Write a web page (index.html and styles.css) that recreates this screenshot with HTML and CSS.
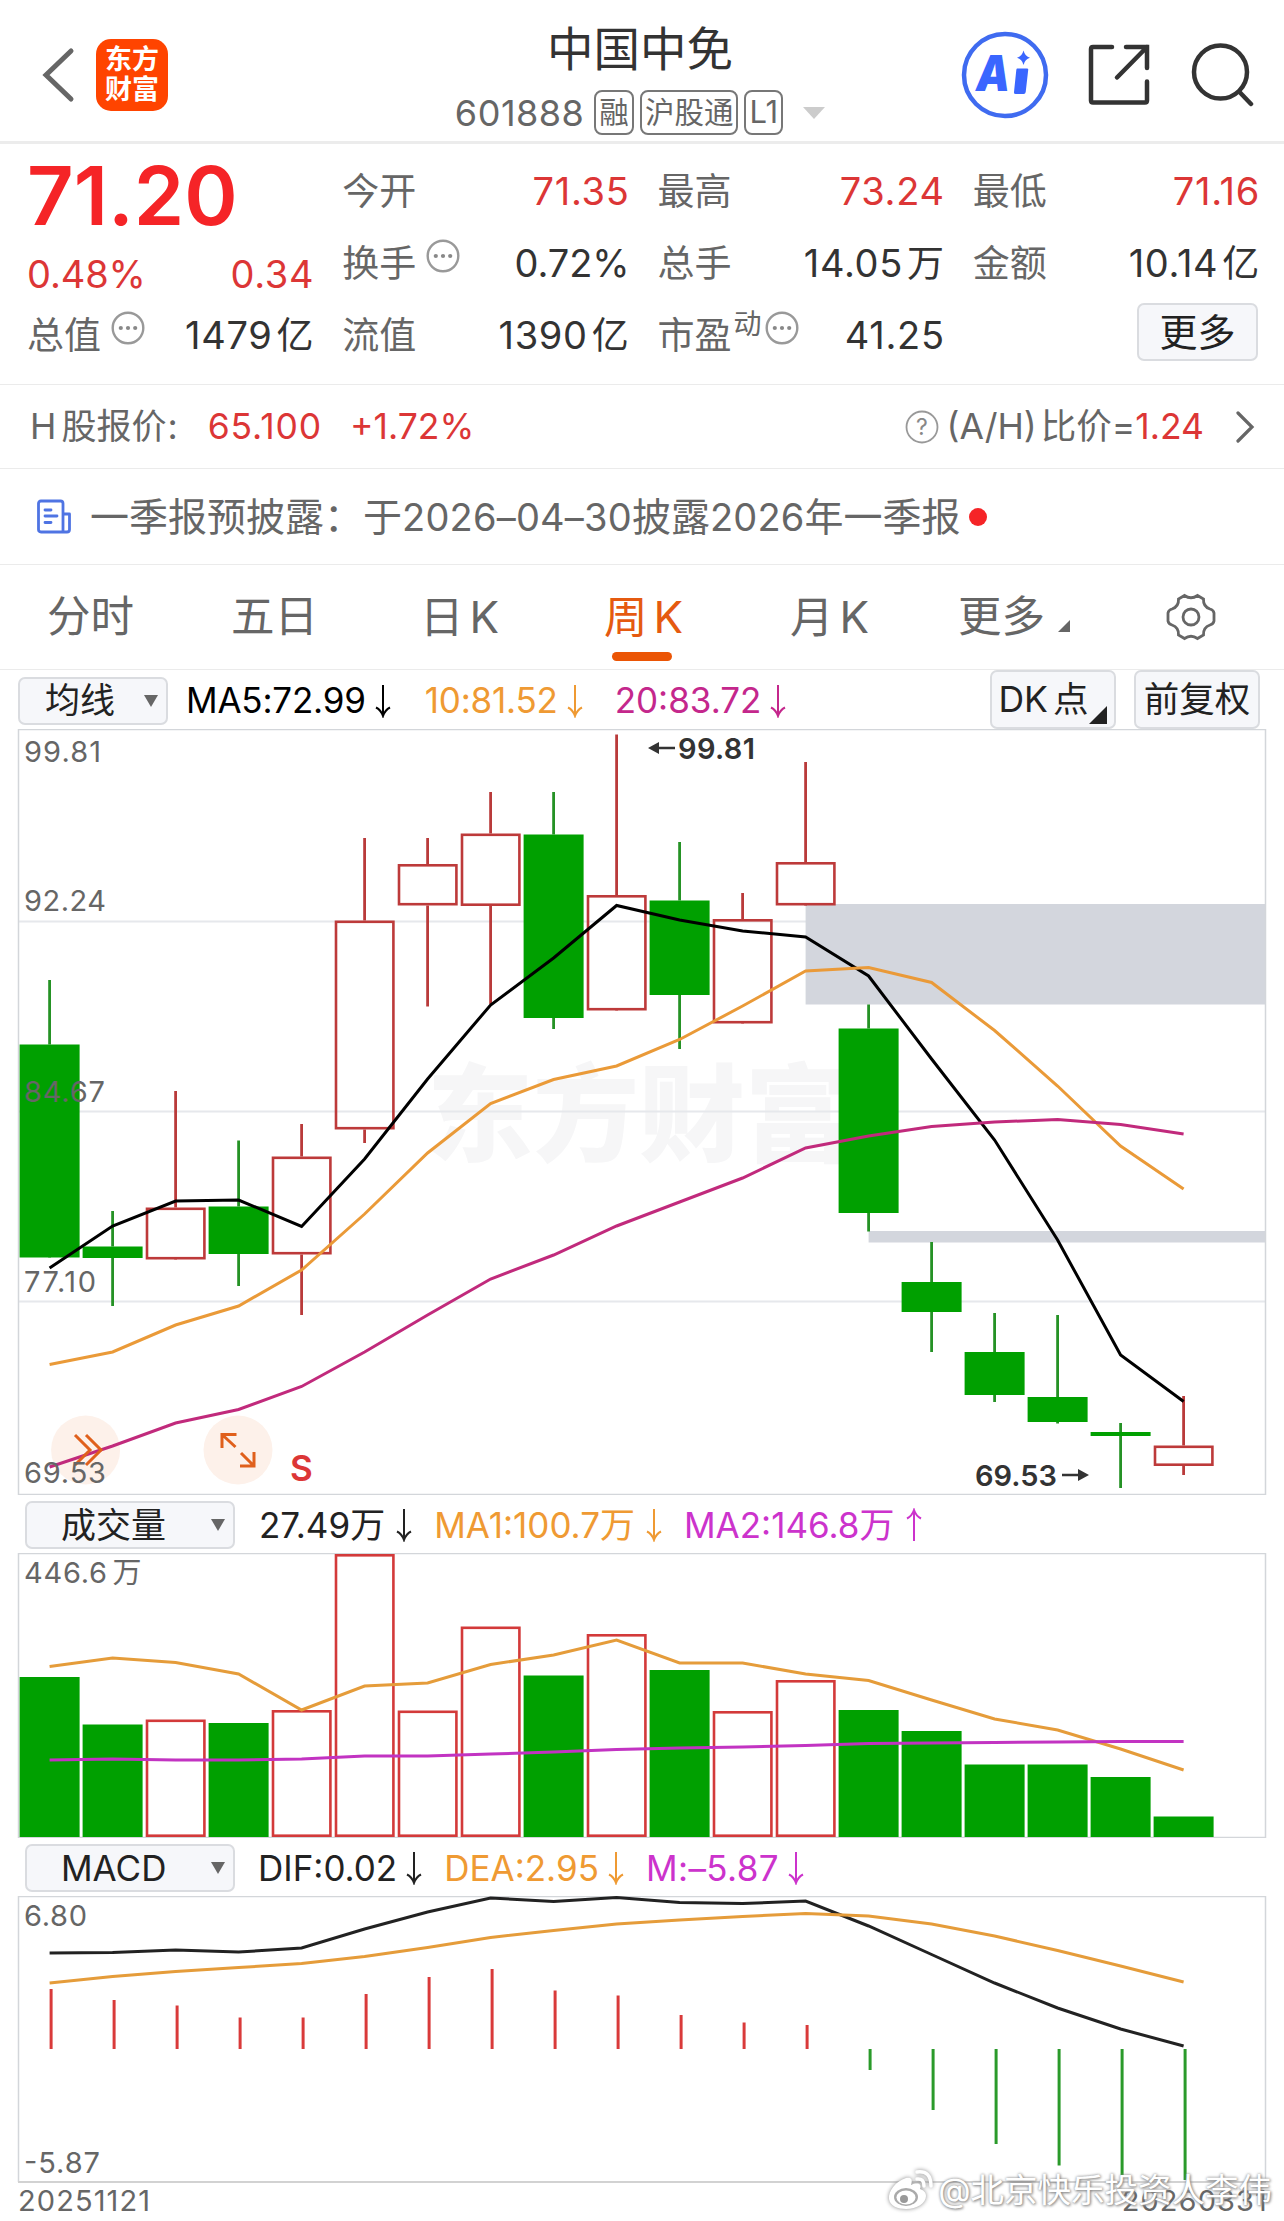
FILE: index.html
```html
<!DOCTYPE html>
<html lang="zh-CN">

<head>
  <meta charset="UTF-8">
  <meta name="viewport" content="width=device-width, initial-scale=1.0">
  <title>中国中免 601888</title>
  <link rel="stylesheet" href="styles.css">
</head>

<body>
  <header class="header">
    <div class="header-left">
      <svg class="back" width="34" height="56" viewBox="0 0 34 56"><path d="M30 4 L5 28 L30 52" /></svg>
      <div class="logo"><span>东方</span><span>财富</span></div>
    </div>
    <div class="header-title">
      <h1>中国中免</h1>
      <div class="sub">
        <span class="code">601888</span>
        <span class="tag">融</span>
        <span class="tag">沪股通</span>
        <span class="tag tag-l1">L1</span>
        <span class="caret"></span>
      </div>
    </div>
    <div class="header-right">
      <svg width="88" height="88" viewBox="0 0 88 88">
        <circle cx="44" cy="44" r="41" fill="none" stroke="#3f6bf0" stroke-width="4.5" />
        <text class="ai" x="15" y="60" textLength="34" lengthAdjust="spacingAndGlyphs">A</text>
        <path d="M56 37.500 h10 q1.500 0 1.200 1.500 l-2.500 22 q-.3 2-2 2 h-8 q-2 0-1.700-2 l2.300-22 q.2-1.500 .7-1.500z" fill="#3a66ff" />
        <path d="M62.500 19.500 q1.500 6 6.500 7.300 q-5 1.200-6.500 7.200 q-1.500-6-6.500-7.200 q5-1.300 6.500-7.300z" fill="#3a66ff" />
      </svg>
      <svg class="line-icon share" width="64" height="64" viewBox="0 0 64 64">
        <path d="M25 4 H6 Q4 4 4 6 V57.500 Q4 59.500 6 59.500 H58 Q60 59.500 60 57.500 V38.500 M39 4 H60 V25 M60 4 L30 34.500" />
      </svg>
      <svg class="line-icon search" width="64" height="64" viewBox="0 0 64 64">
        <circle cx="30.500" cy="29" r="26.500" />
        <path d="M49.500 49 L61 61" />
      </svg>
    </div>
  </header>

  <section class="quote">
    <div class="col">
      <div class="price">71.20</div>
      <div class="cell change"><span class="val pct up">0.48%</span><span class="val up">0.34</span></div>
      <div class="cell"><span class="label">总值</span><svg class="more-dot" viewBox="0 0 34 34"><use href="#dots" /></svg><span class="val">1479<i>亿</i></span></div>
    </div>
    <div class="col">
      <div class="cell"><span class="label">今开</span><span class="val up">71.35</span></div>
      <div class="cell"><span class="label">换手</span><svg class="more-dot" viewBox="0 0 34 34"><use href="#dots" /></svg><span class="val pct">0.72%</span></div>
      <div class="cell"><span class="label">流值</span><span class="val">1390<i>亿</i></span></div>
    </div>
    <div class="col">
      <div class="cell"><span class="label">最高</span><span class="val up">73.24</span></div>
      <div class="cell"><span class="label">总手</span><span class="val">14.05<i>万</i></span></div>
      <div class="cell"><span class="label">市盈</span><span class="dyn">动</span><svg class="more-dot tight" viewBox="0 0 34 34"><use href="#dots" /></svg><span class="val">41.25</span></div>
    </div>
    <div class="col">
      <div class="cell"><span class="label">最低</span><span class="val up">71.16</span></div>
      <div class="cell"><span class="label">金额</span><span class="val">10.14<i>亿</i></span></div>
      <div class="cell"><button class="btn btn-more">更多</button></div>
    </div>
  </section>

  <section class="hshare">
    <span class="h-label">H<i>股报价</i>:</span>
    <span class="up h-price">65.100</span>
    <span class="up h-pct">+1.72%</span>
    <span class="ratio">
      <svg width="34" height="34" viewBox="0 0 34 34"><circle cx="17" cy="17" r="15.500" fill="none" stroke="#999" stroke-width="1.800" /><text class="q" x="17" y="25" text-anchor="middle">?</text></svg>
      <span class="ah">(A/H)</span><i>比价</i>=<span class="up">1.24</span>
      <svg class="chev" width="20" height="32" viewBox="0 0 20 32"><path d="M3 2 L17 16 L3 30" /></svg>
    </span>
  </section>

  <section class="news">
    <svg width="36" height="36" viewBox="0 0 36 36" fill="none" stroke="#4f74e3" stroke-width="2.800" stroke-linecap="round" stroke-linejoin="round">
      <path d="M27 33 H5 Q2.500 33 2.500 30.500 V4.500 Q2.500 2 5 2 H24.500 Q27 2 27 4.500 V33 H31 Q33.500 33 33.500 30.500 V15 H27" />
      <path d="M9 11 H15 M9 17 H21 M9 23.500 H15" />
    </svg>
    <p>一季报预披露：于<b>2026–04–30</b>披露<b>2026</b>年一季报</p>
    <span class="dot"></span>
  </section>

  <nav class="tabs">
    <a>分时</a>
    <a>五日</a>
    <a>日<b>K</b></a>
    <a class="active">周<b>K</b></a>
    <a>月<b>K</b></a>
    <a class="tab-more">更多</a>
    <svg class="gear" width="52" height="52" viewBox="0 0 52 52">
      <path d="M19.500 4.500 Q26 9 32.500 4.500 L38.500 8 Q38 15.500 45 18 Q48.500 19 49 22 V30 Q48.500 33 45 34 Q38 36.500 38.500 44 L32.500 47.500 Q26 43 19.500 47.500 L13.500 44 Q14 36.500 7 34 Q3.500 33 3 30 V22 Q3.500 19 7 18 Q14 15.500 13.500 8 Z" />
      <circle cx="26" cy="26" r="8" />
    </svg>
  </nav>

  <div class="bar bar-ma">
    <button class="btn select">均线<span class="tri"></span></button>
    <span class="ind black">MA5:72.99<svg class="arrow" viewBox="0 0 16 34"><use href="#down" /></svg></span>
    <span class="ind orange">10:81.52<svg class="arrow" viewBox="0 0 16 34"><use href="#down" /></svg></span>
    <span class="ind magenta">20:83.72<svg class="arrow" viewBox="0 0 16 34"><use href="#down" /></svg></span>
    <div class="bar-right">
      <button class="btn btn-tall dk">DK<i>点</i></button>
      <button class="btn btn-tall">前复权</button>
    </div>
  </div>
  <svg id="kline" class="chart" width="1284" height="766" viewBox="0 729 1284 766"></svg>

  <div class="bar bar-vol">
    <button class="btn select wide">成交量<span class="tri"></span></button>
    <span class="ind dark">27.49万<svg class="arrow" viewBox="0 0 16 34"><use href="#down" /></svg></span>
    <span class="ind orange">MA1:100.7万<svg class="arrow" viewBox="0 0 16 34"><use href="#down" /></svg></span>
    <span class="ind purple">MA2:146.8万<svg class="arrow" viewBox="0 0 16 34"><use href="#up" /></svg></span>
  </div>
  <svg id="volume" class="chart" width="1284" height="285" viewBox="0 1553 1284 285"></svg>

  <div class="bar bar-macd">
    <button class="btn select wide">MACD<span class="tri"></span></button>
    <span class="ind dark">DIF:0.02<svg class="arrow" viewBox="0 0 16 34"><use href="#down" /></svg></span>
    <span class="ind orange">DEA:2.95<svg class="arrow" viewBox="0 0 16 34"><use href="#down" /></svg></span>
    <span class="ind purple">M:–5.87<svg class="arrow" viewBox="0 0 16 34"><use href="#down" /></svg></span>
  </div>
  <svg id="macd" class="chart" width="1284" height="287" viewBox="0 1896 1284 287"></svg>

  <footer class="dates"><span>20251121</span><span>20260331</span></footer>

  <div class="weibo">
    <svg width="46" height="42" viewBox="0 0 46 42">
      <path d="M18 9 C8 12 0 22 1 30 C2 37 10 40 18 40 C29 40 38 34 38 27 C38 23 35 21 32 20 C34 15 30 13 23 16 C25 10 23 8 18 9Z" fill="#fff" />
      <ellipse cx="18" cy="28" rx="12" ry="9" fill="#aaa" />
      <ellipse cx="18" cy="28.500" rx="9.500" ry="7" fill="#fff" />
      <circle cx="16" cy="30" r="4" fill="#999" />
      <path d="M29 10 Q36 9 36 17 M29 3 Q43 1 43 17" fill="none" stroke="#fff" stroke-width="3.500" stroke-linecap="round" />
    </svg>
    <span><b>@</b>北京快乐投资人李伟</span>
  </div>

  <!-- shared symbols -->
  <svg width="0" height="0" class="defs">
    <symbol id="dots" viewBox="0 0 34 34">
      <circle cx="17" cy="17" r="15.300" fill="none" stroke="#999" stroke-width="2.400" />
      <circle cx="9.800" cy="17" r="2.100" fill="#888" /><circle cx="17" cy="17" r="2.100" fill="#888" /><circle cx="24.200" cy="17" r="2.100" fill="#888" />
    </symbol>
    <symbol id="down" viewBox="0 0 16 34"><path d="M8 1 V32 M1 23.500 Q6 26 8 32 Q10 26 15 23.500" fill="none" stroke="currentColor" stroke-width="2" /></symbol>
    <symbol id="up" viewBox="0 0 16 34"><path d="M8 33 V2 M1 10.500 Q6 8 8 2 Q10 8 15 10.500" fill="none" stroke="currentColor" stroke-width="2" /></symbol>
  </svg>

  <script src="script.js"></script>
</body>

</html>
```

FILE: styles.css
```css
/* General */
* {
  box-sizing: border-box;
}

body {
  margin: 0;
  width: 1284px;
  height: 2221px;
  overflow: hidden;
  position: relative;
  background: #fff;
  color: #333;
  font-family: Inter, "Noto Sans CJK SC", sans-serif;
  font-size: 36px;
  line-height: 1;
}

i {
  font-style: normal;
}

b {
  font-weight: 400;
}

.up {
  color: #dc3636;
}

.defs {
  position: absolute;
}

/* Header */
.header {
  display: grid;
  grid-template-columns: 1fr auto 1fr;
  height: 144px;
  border-bottom: 3px solid #ececec;
}

.header-left {
  display: flex;
  align-items: center;
  padding: 8px 0 0 41px;
}

.back path,
.chev path {
  fill: none;
  stroke: #666;
  stroke-width: 5;
  stroke-linecap: round;
}

.logo {
  display: flex;
  flex-direction: column;
  align-items: center;
  justify-content: center;
  width: 72px;
  height: 72px;
  margin-left: 21px;
  border-radius: 15px;
  background: #ff4400;
  color: #fff;
  font-size: 27px;
  font-weight: 700;
  line-height: 30px;
}

.header-title {
  display: flex;
  flex-direction: column;
  align-items: center;
  padding-right: 4px;
}

h1 {
  margin: 25px 0 0;
  font-size: 46.5px;
  font-weight: 400;
  line-height: 48px;
}

.sub {
  display: flex;
  align-items: center;
  margin-top: 17px;
  color: #666;
}

.code {
  margin-right: 10px;
  letter-spacing: 0.5px;
}

.tag {
  height: 45px;
  margin-right: 6px;
  padding: 0 3px;
  border: 2px solid #777;
  border-radius: 8px;
  font-size: 29.5px;
  line-height: 40px;
}

.tag-l1 {
  font-size: 31px;
}

.caret {
  margin: 0 0 0 14px;
  border: 11px solid transparent;
  border-top: 12px solid #ccc;
  border-bottom: 0;
}

.header-right {
  display: flex;
  align-items: center;
  justify-content: flex-end;
  padding: 9px 30px 0 0;
}

.ai {
  font-size: 50px;
  font-style: italic;
  font-weight: 900;
  fill: #3a66ff;
}

.line-icon {
  fill: none;
  stroke: #333;
  stroke-width: 4.5;
  stroke-linecap: round;
}

.share {
  margin-left: 38px;
}

.search {
  margin-left: 39px;
}

/* Quote grid */
.quote {
  display: grid;
  grid-template-columns: repeat(4, 1fr);
  gap: 30px;
  height: 241px;
  padding: 11px 26px 0 27px;
  border-bottom: 1px solid #ebebeb;
}

.cell {
  display: flex;
  align-items: center;
  height: 72px;
}

.label {
  color: #666;
  font-size: 37px;
}

.val {
  margin-left: auto;
  margin-right: -2px;
  font-size: 38px;
  letter-spacing: 0.7px;
}

.val.pct {
  letter-spacing: -0.1px;
}

.val i {
  margin-left: 4px;
  font-size: 37px;
}

.price {
  height: 83px;
  color: #f52427;
  font-size: 81px;
  font-weight: 600;
  line-height: 83px;
}

.change {
  height: 61px;
  padding-top: 11px;
}

.change .val:first-child {
  margin-left: 0;
}

.more-dot {
  width: 34px;
  height: 34px;
  margin: 0 0 14px 10px;
}

.more-dot.tight {
  margin-left: 3px;
}

.dyn {
  margin: 0 0 22px 2px;
  color: #666;
  font-size: 28px;
}

/* Buttons */
.btn {
  padding: 0;
  border: 2px solid #dadce0;
  border-radius: 7px;
  background: #f6f7fa;
  color: #222;
  font: inherit;
}

.btn-more {
  width: 121px;
  height: 58px;
  margin: 0 0 6px auto;
  font-size: 38px;
}

/* H share row */
.hshare {
  display: flex;
  align-items: center;
  height: 84px;
  padding: 0 29px 0 30px;
  border-bottom: 1px solid #ebebeb;
  color: #666;
  font-size: 35.5px;
}

.h-label i {
  margin: 0 1px 0 5px;
  font-size: 35px;
}

.h-price {
  margin-left: 30px;
  letter-spacing: 0.9px;
}

.h-pct {
  margin-left: 28px;
}

.ratio {
  display: flex;
  align-items: center;
  margin-left: auto;
}

.q {
  font-size: 23px;
  fill: #888;
}

.ah {
  margin: 0 4px 0 8px;
}

.chev {
  margin-left: 31px;
}

.chev path {
  stroke-width: 3.2;
}

/* News row */
.news {
  display: flex;
  align-items: center;
  height: 96px;
  padding-left: 36px;
  border-bottom: 1px solid #ebebeb;
  color: #666;
  font-size: 39px;
}

.news p {
  margin: 0 0 0 18px;
}

.news b {
  font-size: 38px;
  letter-spacing: 0.2px;
}

.dot {
  width: 18px;
  height: 18px;
  margin-left: 8px;
  border-radius: 50%;
  background: #f52427;
}

/* Tabs */
.tabs {
  display: grid;
  grid-template-columns: 184px 189px 184px 186px 168px 207px 1fr;
  align-items: center;
  height: 105px;
  padding-left: 47px;
  border-bottom: 1px solid #ebebeb;
  color: #666;
  font-size: 43.5px;
}

.tabs b {
  margin-left: 6px;
  font-size: 44px;
}

.tabs .active {
  position: relative;
  color: #e55a10;
}

.active::after {
  content: "";
  position: absolute;
  left: 8px;
  top: 57px;
  width: 60px;
  height: 9px;
  border-radius: 5px;
  background: #eb5505;
}

.tab-more::after {
  content: "";
  display: inline-block;
  margin-left: 13px;
  border: 6px solid #666;
  border-left-color: transparent;
  border-top-color: transparent;
}

.gear {
  fill: none;
  stroke: #666;
  stroke-width: 2.8;
}

/* Indicator bars */
.bar {
  display: flex;
  align-items: center;
  height: 58px;
  padding-top: 2px;
  font-size: 35px;
}

.bar-ma {
  height: 59px;
  padding-left: 18px;
}

.bar-vol,
.bar-macd {
  padding-left: 25px;
}

.select {
  display: flex;
  align-items: center;
  justify-content: space-between;
  width: 150px;
  height: 48px;
  margin-right: 18px;
  padding: 0 8px 0 25px;
  font-size: 35px;
}

.select.wide {
  width: 210px;
  margin-right: 23px;
  padding-left: 34px;
}

.tri {
  border: 7px solid transparent;
  border-top: 12px solid #666;
  border-bottom: 0;
}

.ind {
  display: flex;
  align-items: center;
}

.bar-ma .ind {
  margin-right: 34px;
  letter-spacing: -0.2px;
}

.bar-ma .orange {
  margin-right: 32px;
}

.bar-ma .magenta {
  letter-spacing: 0;
}

.bar-vol .ind,
.bar-macd .ind {
  margin-right: 22px;
}

.bar-vol .dark {
  margin-left: 1px;
}

.bar-macd .purple {
  letter-spacing: 0.4px;
}

.arrow {
  width: 16px;
  height: 34px;
  margin-left: 9px;
}

.bar-vol .arrow {
  margin-left: 11px;
}

.bar-right {
  display: flex;
  gap: 18px;
  margin: -2px 24px 0 auto;
}

.btn-tall {
  width: 126px;
  height: 59px;
  font-size: 35.5px;
}

.dk {
  position: relative;
  padding-right: 19px;
}

.dk i {
  margin-left: 5px;
}

.dk::after {
  content: "";
  position: absolute;
  right: 7px;
  bottom: 3px;
  border: 9px solid #222;
  border-left-color: transparent;
  border-top-color: transparent;
}

.black { color: #000; }
.dark { color: #222; }
.orange { color: #ef9a33; }
.magenta { color: #c4278c; }
.purple { color: #cc33cc; }

/* Charts */
.chart {
  display: block;
}

.frame {
  fill: none;
  stroke: #d3d6da;
  stroke-width: 1.5;
}

.grid {
  stroke: #e6e8ec;
  stroke-width: 2;
}

.gap {
  fill: #d3d6dd;
}

.axis {
  font-size: 29px;
  fill: #666;
}

.mark {
  font-size: 29px;
  font-weight: 600;
  fill: #333;
}

.watermark {
  font-size: 106px;
  font-weight: 900;
  fill: #f6f6f7;
}

.sell {
  font-size: 35px;
  font-weight: 600;
  fill: #dc3636;
}

.round {
  fill: #fdf1ea;
}

.round-icon {
  fill: none;
  stroke: #e0601c;
  stroke-width: 3;
}

.line {
  fill: none;
  stroke-width: 3;
}

/* Dates */
.dates {
  display: flex;
  justify-content: space-between;
  padding: 3px 16px 0 18px;
  color: #666;
  font-size: 29px;
  letter-spacing: 1.1px;
  line-height: 30px;
}

/* Watermark over the chart corner */
.weibo {
  position: absolute;
  right: 12px;
  bottom: 10px;
  display: flex;
  align-items: center;
  gap: 4px;
  color: #fff;
  font-size: 33.5px;
  line-height: 42px;
  text-shadow: 0 0 3px #888, 1px 1px 3px #888;
}

.weibo svg {
  filter: drop-shadow(0 0 2px #888);
}
```

FILE: script.js
```javascript
const GREEN = "#00a000";
const START = 49.6;
const STEP = 63;

// [up, high, bodyTop, bodyBottom, low]
const candles = [
  [0, 980, 1044.5, 1257.5, 1257], [0, 1211, 1246.5, 1258, 1306], [1, 1091, 1207.5, 1259.5, 1259],
  [0, 1140.5, 1206.5, 1254, 1286], [1, 1124, 1156.5, 1254.5, 1315], [1, 838, 920.5, 1129.5, 1143],
  [1, 838, 864, 905.5, 1006.5], [1, 792, 833.5, 906, 1004], [0, 792, 834.5, 1018, 1029],
  [1, 734.5, 895, 1010.5, 1010], [0, 842, 900.5, 995, 1049], [1, 893, 919, 1023.5, 1023],
  [1, 762, 862, 905.5, 905], [0, 1004.5, 1028.5, 1213, 1231.5], [0, 1242, 1282, 1312, 1352],
  [0, 1313, 1352, 1395, 1402], [0, 1315, 1397, 1422, 1423.5], [0, 1423, 1432, 1436, 1488],
  [1, 1396, 1445.5, 1466, 1475]
];
const ma5 = [1268, 1226, 1201, 1200, 1226.5, 1159, 1079, 1005, 958, 905.5, 920, 931, 937, 976, 1059, 1140, 1240, 1355, 1401.5];
const ma10 = [1364.5, 1352, 1325, 1306, 1270, 1214, 1153, 1103.5, 1079.5, 1066, 1039.5, 1006, 971, 967.5, 982.5, 1030.5, 1086, 1146, 1189];
const ma20 = [1467, 1446, 1423, 1409.5, 1386.5, 1352, 1315, 1279, 1255, 1226, 1202, 1178, 1148, 1136, 1126.5, 1122, 1119.5, 1124.5, 1134];

const volTops = [1677, 1724.5, 1719.5, 1723, 1710, 1554, 1710.5, 1626.5, 1675.5, 1634, 1670, 1711, 1680, 1710, 1731, 1764.5, 1764.5, 1777, 1816.5];
const volMa1 = [1666.5, 1658, 1662.5, 1674, 1710, 1686, 1683, 1664.5, 1655, 1640, 1663, 1663, 1674, 1680.5, 1700, 1719, 1730, 1749, 1770];
const volMa2 = [1760, 1759, 1760, 1760, 1759, 1756, 1756, 1754, 1752, 1749.5, 1748, 1747, 1745.5, 1743.5, 1743, 1742.5, 1742, 1741.5, 1741.5];

const dif = [1953, 1952.5, 1950, 1952, 1948, 1929, 1912, 1898, 1901.5, 1897.5, 1902.5, 1903.5, 1901, 1926, 1954.5, 1983, 2008, 2029, 2046];
const dea = [1983, 1976.5, 1971.5, 1967.5, 1963.5, 1956.5, 1947.5, 1937.5, 1930.5, 1924, 1920, 1916.5, 1913.5, 1916, 1924, 1936, 1950.5, 1966, 1982];
const hist = [1989, 2000, 2005.5, 2017.5, 2017.5, 1994, 1977, 1969, 1990.5, 1995.5, 2015, 2022.5, 2025, 2070, 2110, 2144, 2165.5, 2176, 2180];

function cx(i) {
  return START + STEP * i;
}

function line(data, color) {
  const points = data.map((y, i) => cx(i) + "," + y).join(" ");
  return `<polyline class="line" points="${points}" stroke="${color}" />`;
}

function box(i, up, top, bottom, red) {
  if (up) {
    return `<rect x="${cx(i) - 28.6}" y="${top + 1.3}" width="57.400" height="${bottom - top - 2.6}" fill="none" stroke="${red}" stroke-width="2.600" />`;
  }
  return `<rect x="${cx(i) - 30}" y="${top}" width="60" height="${bottom - top}" fill="${GREEN}" />`;
}

function stick(x, y1, y2, color, width) {
  return `<path d="M${x} ${y1}V${y2}" stroke="${color}" stroke-width="${width}" />`;
}

function text(cls, x, y, value, length) {
  return `<text class="${cls}" x="${x}" y="${y}" ${length ? `textLength="${length}"` : ""}>${value}</text>`;
}

function drawKline() {
  let s = text("watermark", 427, 1153, "东方财富", 424);
  s += `<path class="grid" d="M19 921.500H1265M19 1111.500H1265M19 1301.500H1265" />`;
  s += `<rect class="gap" x="805.600" y="904" width="459.400" height="100.500" /><rect class="gap" x="868.600" y="1231" width="396.400" height="11.500" />`;
  s += `<rect class="frame" x="18.500" y="729.500" width="1247" height="765" />`;
  s += `<circle class="round" cx="85.600" cy="1450" r="34.500" /><circle class="round" cx="238" cy="1450" r="34.500" />`;
  candles.forEach(([up, high, top, bottom, low], i) => {
    const color = up ? "#b93a3a" : "#259225";
    s += stick(cx(i), high, top, color, 2.8) + stick(cx(i), bottom, low, color, 2.8);
    s += box(i, up, top, bottom, "#bd3a3a");
  });
  s += line(ma5, "#000") + line(ma10, "#ea9a38") + line(ma20, "#c12a7c");
  // icons of the floating buttons
  s += `<path class="round-icon" d="M75 1435L90 1450L75 1465M86 1435L101 1450L86 1465M235.500 1447L222 1434.500M222 1448V1434.500H236.500M241 1453L254 1466M254 1452V1466H240" />`;
  s += text("sell", 290, 1480.5, "S");
  s += text("axis", 24, 762, "99.81", 77) + text("axis", 24, 911, "92.24", 82) + text("axis", 24, 1101.5, "84.67", 81);
  s += text("axis", 24, 1292, "77.10", 72) + text("axis", 24, 1482.5, "69.53", 82);
  s += text("mark", 678, 759, "99.81", 77) + text("mark", 975, 1486, "69.53", 82);
  s += `<path d="M655 748H675M1062 1475H1082" stroke="#333" stroke-width="2.600" /><path d="M648 748l11 -6v12zM1089 1475l-11 -6v12z" fill="#333" />`;
  document.getElementById("kline").innerHTML = s;
}

function drawVolume() {
  let s = `<rect class="frame" x="18.500" y="1553.500" width="1247" height="284" />`;
  volTops.forEach((top, i) => {
    s += box(i, candles[i][0] && i < 18, top, 1837, "#d33a3a");
  });
  s += line(volMa1, "#e59c3a") + line(volMa2, "#c233c2");
  s += text("axis", 24, 1582.5, "446.6", 83) + text("axis", 112.5, 1582.5, "万");
  document.getElementById("volume").innerHTML = s;
}

function drawMacd() {
  let s = `<path class="frame" d="M18.500 2182V1896.500H1265.500V2182" /><path d="M18 2182H1266" stroke="#d2d2d2" stroke-width="2" />`;
  hist.forEach((y, i) => {
    s += stick(cx(i) + 1.5, 2049, y, y < 2049 ? "#d93a3a" : "#2a9a2a", 3);
  });
  s += line(dif, "#222") + line(dea, "#e59c3a");
  s += text("axis", 24, 1926, "6.80", 63) + text("axis", 24, 2173, "-5.87", 76);
  document.getElementById("macd").innerHTML = s;
}

drawKline();
drawVolume();
drawMacd();
```
